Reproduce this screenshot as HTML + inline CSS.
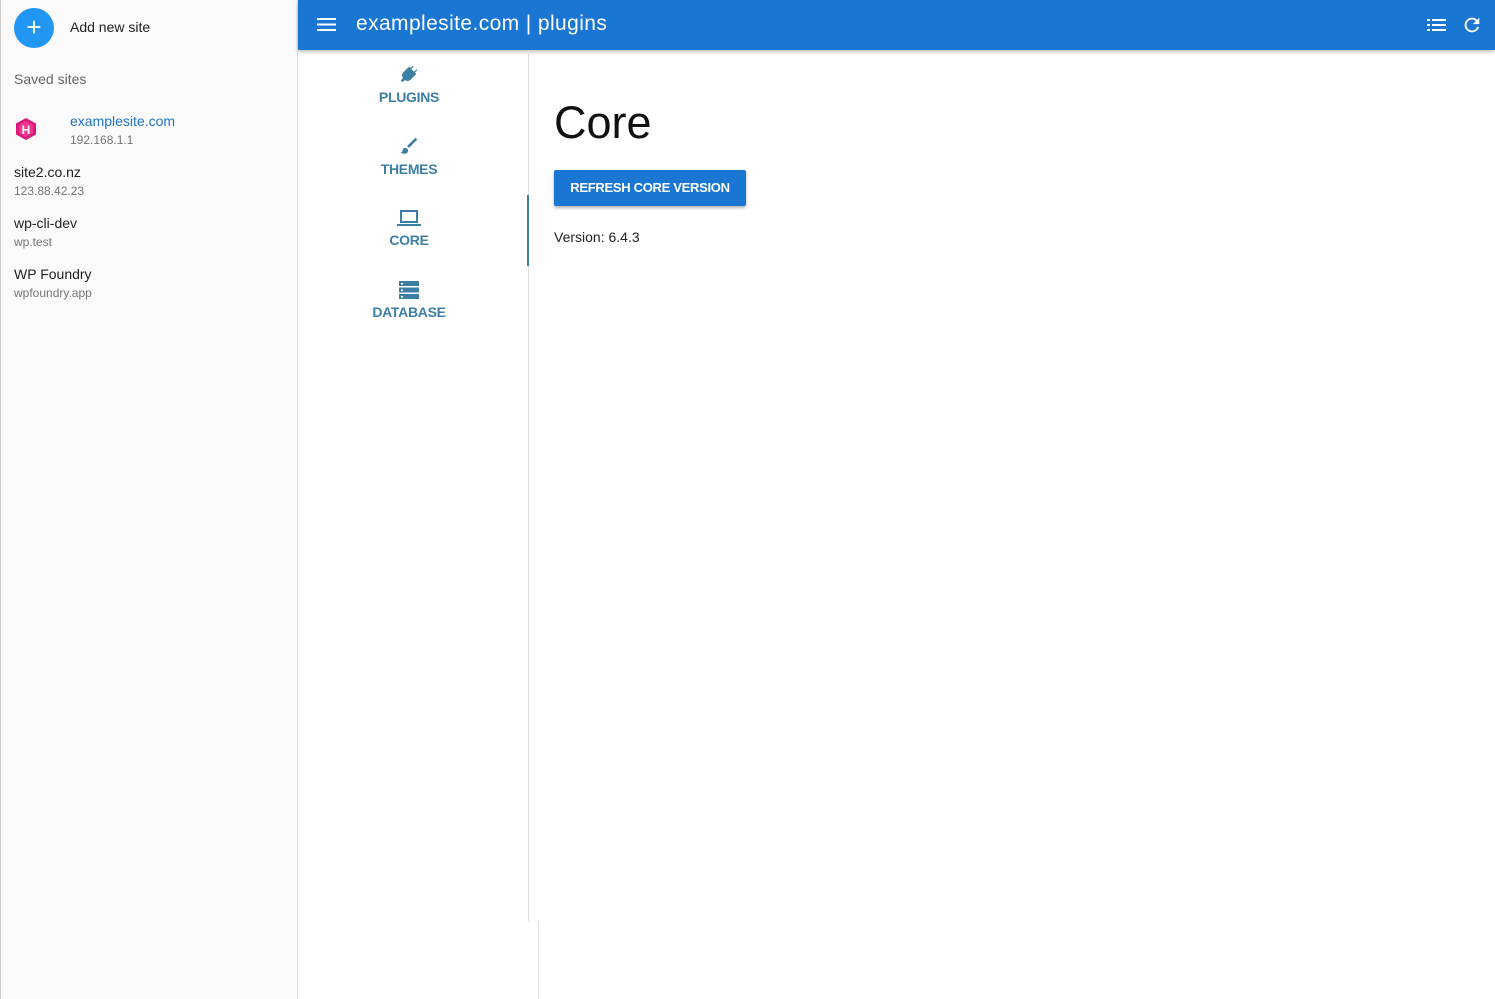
<!DOCTYPE html>
<html><head><meta charset="utf-8"><style>
*{box-sizing:border-box;margin:0;padding:0}
body{width:1495px;height:999px;overflow:hidden;font-family:"Liberation Sans",Roboto,sans-serif;background:#fff;position:relative}
#side{position:absolute;left:0;top:0;width:298px;height:999px;background:#fafafa;border-right:1px solid #e0e0e0}
#side:before{content:"";position:absolute;left:0;top:0;width:1px;height:999px;background:#ccc}
.fab{position:absolute;left:14px;top:8px;width:40px;height:40px;border-radius:50%;background:#2196f3;color:#fff;font-size:26px;line-height:38px;text-align:center}
.add{position:absolute;left:70px;top:19px;font-size:14px;color:#222}
.hdr{position:absolute;left:14px;top:71px;font-size:14px;color:#666}
.site{position:absolute;font-size:14px;color:#222}
.site small{display:block;font-size:12px;color:#757575;margin-top:4px}
#bar{position:absolute;left:298px;top:0;right:0;height:50px;background:#1976d2;box-shadow:0 2px 4px rgba(0,0,0,.25);color:#fff}
#bar .t{position:absolute;left:58px;top:12px;font-size:21px;letter-spacing:.4px}
#tabs{position:absolute;left:298px;top:50px;width:231px;height:871px;border-right:1px solid #e0e0e0}
.tab{position:absolute;left:0;width:222px;text-align:center;color:#3d7fa3;font-size:14px;font-weight:bold;letter-spacing:-.3px}
.tab svg{display:block;margin:0 auto 4px}
#active{position:absolute;left:527px;top:195px;width:2px;height:71px;background:#3d7fa3}
#line2{position:absolute;left:538px;top:921px;width:1px;height:78px;background:#e0e0e0}
h1{position:absolute;left:554px;top:97px;font-size:45px;font-weight:normal;color:#111}
.btn{position:absolute;left:554px;top:170px;width:192px;height:36px;background:#1976d2;color:#fff;border-radius:2px;box-shadow:0 2px 3px rgba(0,0,0,.3);font-size:13px;font-weight:bold;line-height:36px;text-align:center;letter-spacing:-.3px}
.ver{position:absolute;left:554px;top:229px;font-size:14px;color:#222}
</style></head><body>
<div id="side">
<div class="fab">+</div>
<div class="add">Add new site</div>
<div class="hdr">Saved sites</div>
<svg style="position:absolute;left:15px;top:117px" width="22" height="24" viewBox="0 0 22 24"><polygon points="11,1 21,6.5 21,17.5 11,23 1,17.5 1,6.5" fill="#d81b7a"/><polygon points="11,4 18,8 18,16 11,20 4,16 4,8" fill="#f0368f"/><text x="11" y="17" font-size="12" font-weight="bold" fill="#fff" text-anchor="middle" font-family="Liberation Sans">H</text></svg>
<div class="site" style="left:70px;top:113px;color:#1e73c8">examplesite.com<small>192.168.1.1</small></div>
<div class="site" style="left:14px;top:164px">site2.co.nz<small>123.88.42.23</small></div>
<div class="site" style="left:14px;top:215px">wp-cli-dev<small>wp.test</small></div>
<div class="site" style="left:14px;top:266px">WP Foundry<small>wpfoundry.app</small></div>
</div>
<div id="bar">
<svg style="position:absolute;left:19px;top:17px" width="19" height="15" viewBox="0 0 19 15"><rect y="1" width="19" height="2" fill="#fff"/><rect y="6.5" width="19" height="2" fill="#fff"/><rect y="12" width="19" height="2" fill="#fff"/></svg>
<div class="t">examplesite.com | plugins</div>
<svg style="position:absolute;left:1129px;top:18px" width="19" height="14" viewBox="0 0 19 14"><g fill="#fff"><rect x="0" y="1" width="3" height="2"/><rect x="5" y="1" width="14" height="2"/><rect x="0" y="6" width="3" height="2"/><rect x="5" y="6" width="14" height="2"/><rect x="0" y="11" width="3" height="2"/><rect x="5" y="11" width="14" height="2"/></g></svg>
<svg style="position:absolute;left:1163px;top:14px" width="22" height="22" viewBox="0 0 24 24"><path fill="#fff" d="M17.65 6.35A7.96 7.96 0 0 0 12 4a8 8 0 1 0 7.73 10h-2.08A6 6 0 1 1 12 6c1.66 0 3.14.69 4.22 1.78L13 11h7V4l-2.35 2.35z"/></svg>
</div>
<div id="tabs">
<div class="tab" style="top:13px"><svg width="22" height="22" viewBox="0 0 24 24"><path fill="#3d7fa3" d="M16 3l-2.5 2.5-1.5-1.5-6 6c-2 2-2 4.5-.5 6.5L3 19l2 2 2.5-2.5c2 1.5 4.5 1.5 6.5-.5l6-6-1.5-1.5L21 8l-1-1-2.5 2.5-3-3L17 4z"/></svg>PLUGINS</div>
<div class="tab" style="top:85px"><svg width="22" height="22" viewBox="0 0 24 24"><path fill="#3d7fa3" d="M19 3l2 2-9 9-2-2z M8 14c-2 0-3 1.5-3 3 0 1-1 2-2 2 1 1 2.5 1.5 4 1.5 2.5 0 4-1.5 4-3.5 0-1.5-1.5-3-3-3z"/></svg>THEMES</div>
<div class="tab" style="top:158px"><svg width="24" height="20" viewBox="0 0 24 20"><path fill="#3d7fa3" d="M3 2h18v13H3z M5 4v9h14V4z M0 16h24v2H0z" fill-rule="evenodd"/></svg>CORE</div>
<div class="tab" style="top:230px"><svg width="22" height="20" viewBox="0 0 22 20"><g fill="#3d7fa3"><rect x="1" y="1" width="20" height="5"/><rect x="1" y="7.5" width="20" height="5"/><rect x="1" y="14" width="20" height="5"/></g><g fill="#fff"><rect x="3" y="3" width="2" height="1.5"/><rect x="3" y="9.5" width="2" height="1.5"/><rect x="3" y="16" width="2" height="1.5"/></g></svg>DATABASE</div>
</div>
<div id="active"></div>
<div id="line2"></div>
<h1>Core</h1>
<div class="btn">REFRESH CORE VERSION</div>
<div class="ver">Version: 6.4.3</div>
</body></html>
